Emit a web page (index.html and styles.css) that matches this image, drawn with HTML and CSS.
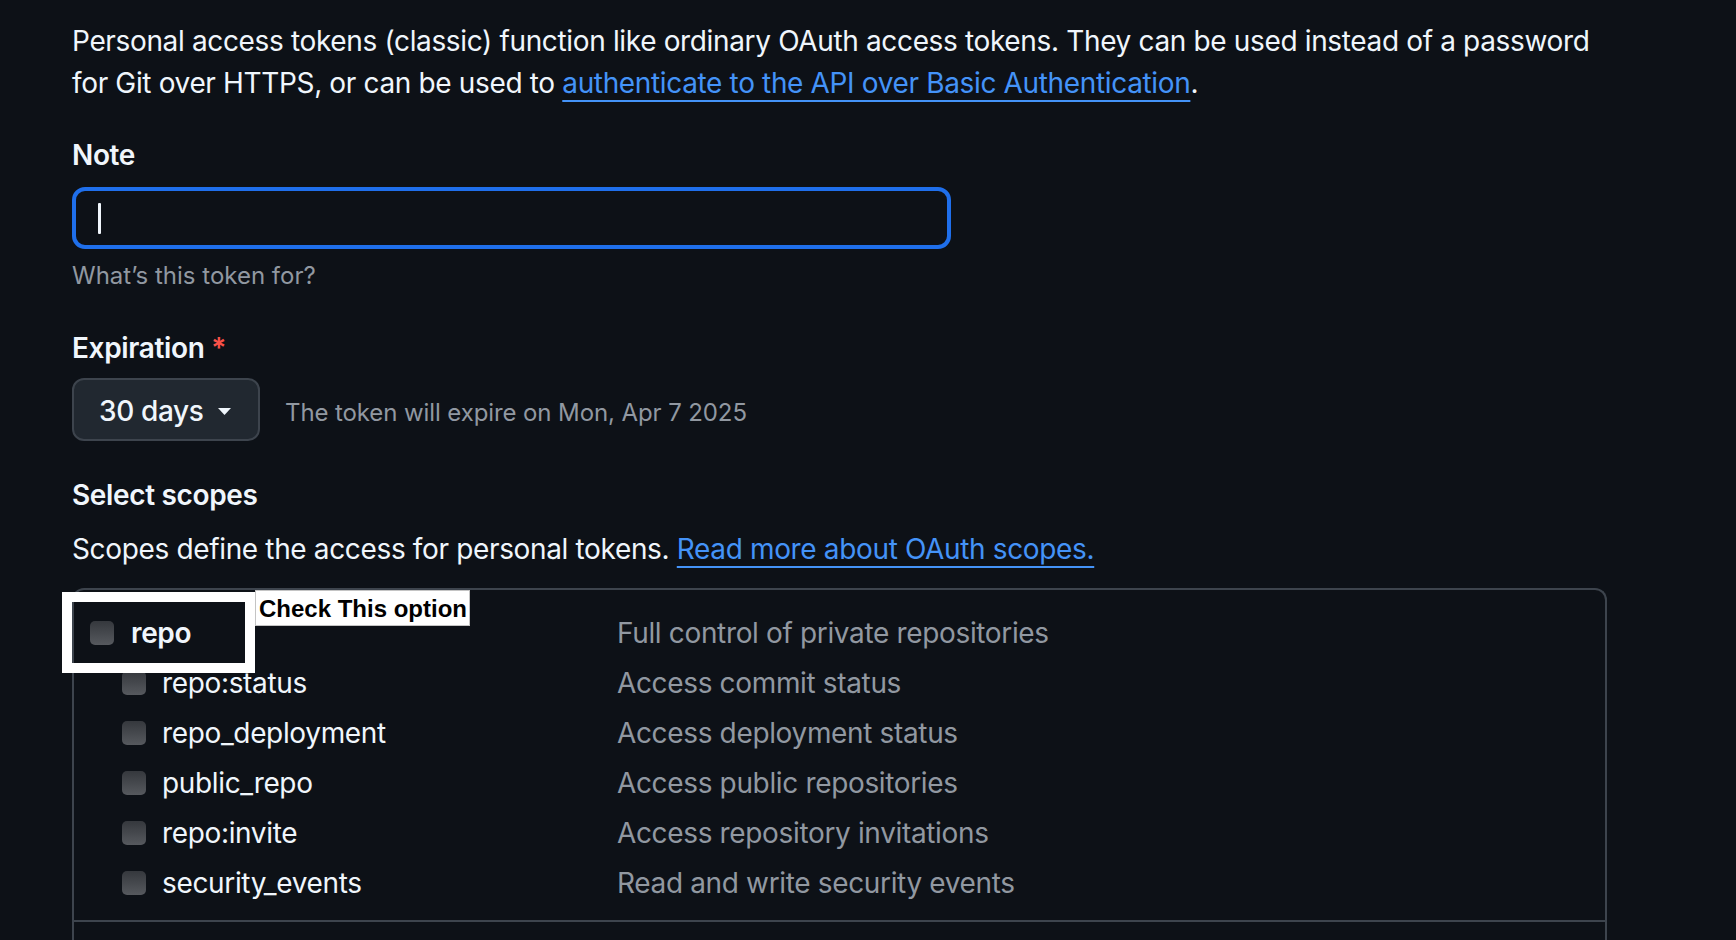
FILE: index.html
```html
<!DOCTYPE html>
<html lang="en">
<head>
<meta charset="utf-8">
<title>New personal access token (classic)</title>
<link rel="stylesheet" href="styles.css">
</head>
<body>
<main class="page">
  <p class="intro">Personal access tokens (classic) function like ordinary OAuth access tokens. They can be used instead of a password<br>for Git over HTTPS, or can be used to <a href="#" class="link">authenticate to the API over Basic Authentication</a>.</p>

  <section class="field">
    <label class="label">Note</label>
    <div class="input"><span class="caret"></span></div>
    <p class="hint">What’s this token for?</p>
  </section>

  <section class="field field-exp">
    <label class="label">Expiration <span class="req">*</span></label>
    <div class="exp-row">
      <button class="btn">30 days <svg class="tri" width="13" height="7" viewBox="0 0 13 7"><path d="M0 0h13L6.5 7z" fill="#f0f6fc"/></svg></button>
      <span class="exp-note">The token will expire on Mon, Apr 7 2025</span>
    </div>
  </section>

  <section class="scopes">
    <h3 class="label">Select scopes</h3>
    <p class="scopes-desc">Scopes define the access for personal tokens. <a href="#" class="link">Read more about OAuth scopes.</a></p>

    <div class="scope-box">
      <div class="group">
        <div class="row parent"><span class="name"><span class="cb"></span>repo</span><span class="desc">Full control of private repositories</span></div>
        <div class="row child"><span class="name"><span class="cb"></span>repo:status</span><span class="desc">Access commit status</span></div>
        <div class="row child"><span class="name"><span class="cb"></span>repo_deployment</span><span class="desc">Access deployment status</span></div>
        <div class="row child"><span class="name"><span class="cb"></span>public_repo</span><span class="desc">Access public repositories</span></div>
        <div class="row child"><span class="name"><span class="cb"></span>repo:invite</span><span class="desc">Access repository invitations</span></div>
        <div class="row child"><span class="name"><span class="cb"></span>security_events</span><span class="desc">Read and write security events</span></div>
      </div>
      <div class="group group-next"></div>

      <div class="annot-box"></div>
      <div class="annot-label">Check This option</div>
    </div>
  </section>
</main>
</body>
</html>
```

FILE: styles.css
```css
* { box-sizing: border-box; }

html, body {
  margin: 0;
  background: #0d1117;
}

body {
  color: #f0f6fc;
  font-family: Inter, "Liberation Sans", sans-serif;
  font-size: 28px;
  line-height: 42px;
  letter-spacing: -0.35px;
  overflow: hidden;
}

.page {
  width: 1736px;
  padding: 20px 0 0 72px;
}

.intro {
  margin: 0;
  white-space: nowrap;
}

.link {
  color: #4493f8;
  text-decoration: underline;
  text-decoration-thickness: 2px;
  text-underline-offset: 7px;
}

.label {
  display: block;
  margin: 0;
  font-size: 28px;
  line-height: 42px;
  font-weight: 600;
}

.field {
  margin-top: 30px;
}

.input {
  margin-top: 11px;
  width: 879px;
  height: 62px;
  border: 4px solid #1f6feb;
  border-radius: 13px;
  padding-left: 22px;
  display: flex;
  align-items: center;
}

.caret {
  width: 3px;
  height: 31px;
  background: #f0f6fc;
  border-radius: 1px;
}

.hint {
  margin: 9px 0 0;
  font-size: 24px;
  line-height: 36px;
  letter-spacing: 0;
  color: #9198a1;
}

.field-exp {
  margin-top: 33px;
}

.req {
  color: #f85149;
}

.exp-row {
  margin-top: 9px;
  display: flex;
  align-items: baseline;
  gap: 25px;
}

.btn {
  height: 63px;
  width: 188px;
  padding: 4px 27px 0 25px;
  background: #212830;
  border: 2px solid #3d444d;
  border-radius: 12px;
  color: #f0f6fc;
  font-family: inherit;
  font-size: 28px;
  line-height: 55px;
  letter-spacing: -0.35px;
  font-weight: 500;
  display: flex;
  align-items: center;
  justify-content: space-between;
}

.tri {
  display: block;
}

.exp-note {
  font-size: 24px;
  line-height: 36px;
  letter-spacing: -0.1px;
  color: #9198a1;
}

.scopes {
  margin-top: 33px;
}

.scopes-desc {
  margin: 12px 0 0;
}

.scope-box {
  position: relative;
  margin-top: 18px;
  width: 1535px;
  border: 2px solid #3d444d;
  border-bottom: none;
  border-radius: 12px 12px 0 0;
}

.group {
  padding: 18px 0 12px 16px;
}

.group + .group {
  border-top: 2px solid #3d444d;
}

.group-next {
  height: 60px;
}

.row {
  display: grid;
  grid-template-columns: 527px 1fr;
  height: 50px;
  line-height: 50px;
  align-items: center;
}

.name {
  display: flex;
  align-items: center;
  gap: 17px;
}

.parent .name {
  font-weight: 600;
}

.child .name {
  padding-left: 32px;
  gap: 16px;
}

.cb {
  width: 24px;
  height: 24px;
  border-radius: 5px;
  background: linear-gradient(#35383d, #56595e);
  flex: none;
}

.desc {
  color: #9198a1;
}

.annot-box {
  position: absolute;
  left: -12px;
  top: 2px;
  width: 193px;
  height: 81px;
  border: 10px solid #ffffff;
}

.annot-label {
  position: absolute;
  left: 181px;
  top: 0;
  height: 36px;
  padding: 2px 2px 0 3px;
  background: #ffffff;
  border: 1px solid #c4c4c4;
  color: #000000;
  font-family: "Liberation Sans", Arial, sans-serif;
  font-size: 24px;
  line-height: 32px;
  letter-spacing: 0;
  font-weight: 700;
  white-space: nowrap;
}
```
